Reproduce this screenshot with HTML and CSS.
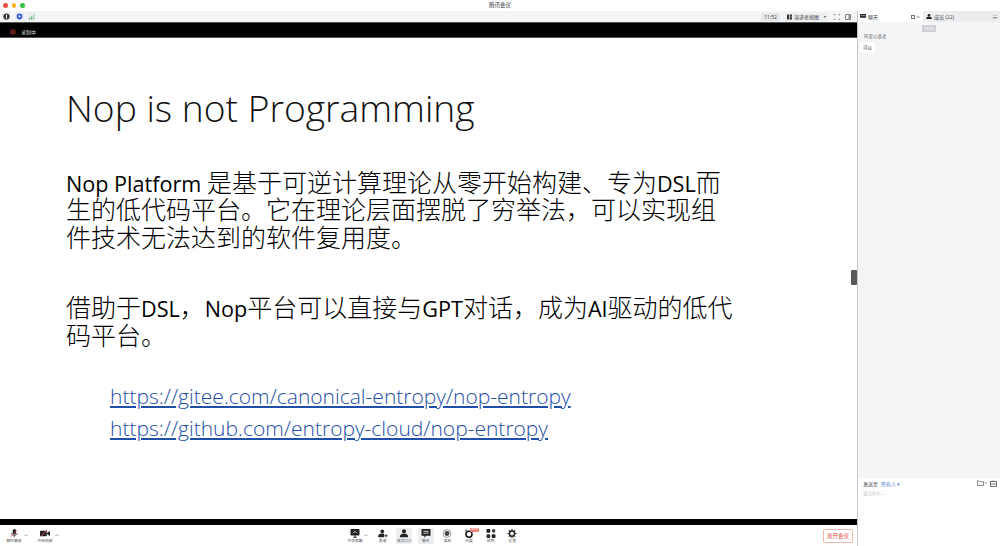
FILE: index.html
```html
<!DOCTYPE html>
<html lang="zh">
<head>
<meta charset="utf-8">
<title>腾讯会议</title>
<link rel="stylesheet" href="styles.css">
</head>
<body>
<header class="titlebar">
  <div class="lights"><i class="light red"></i><i class="light yellow"></i><i class="light green"></i></div>
  <div class="title">腾讯会议</div>
</header>
<div class="main">
  <div class="stage">
    <div class="topbar">
      <div class="status-icons">
        <span class="status-btn"><svg width="7" height="7" viewBox="0 0 9 9"><circle cx="4.500" cy="4.500" r="4" fill="#333"/><rect x="3.800" y="2" width="1.400" height="5" fill="#fff"/></svg></span>
        <span class="status-btn"><svg width="7" height="7" viewBox="0 0 9 9"><path d="M4.500.5 8 2v3c0 2-2 3-3.500 3.500C3 8 1 7 1 5V2z" fill="#2b50e0"/><circle cx="4.500" cy="4.300" r="1.500" fill="#fff"/></svg></span>
        <span class="status-btn"><svg width="6" height="6" viewBox="0 0 9 8"><rect x="0" y="5" width="2" height="3" fill="#6cb87a"/><rect x="3" y="3" width="2" height="5" fill="#6cb87a"/><rect x="6" y="0" width="2" height="8" fill="#a9d6b1"/></svg></span>
      </div>
      <div class="top-right">
        <span class="clock">11:52</span>
        <span class="view-btn"><svg width="6" height="6" viewBox="0 0 7 7"><path d="M0 0h3v7H0zM4 0h3v3H4zM4 4h3v3H4z" fill="#333"/></svg>演讲者视图<b class="caret">▾</b></span>
        <svg class="fs-icon" width="6" height="6" viewBox="0 0 7 7"><path d="M0 2V0h2M5 0h2v2M7 5v2H5M2 7H0V5" fill="none" stroke="#555" stroke-width=".8"/></svg>
        <svg class="fs-icon" width="6" height="6" viewBox="0 0 7 7"><rect x=".5" y=".5" width="6" height="6" rx="1" fill="none" stroke="#555"/><rect x="4" y="1" width="2" height="5" fill="#999"/></svg>
      </div>
    </div>
    <div class="recbar"><span class="rec-wrap"><i class="rec-dot"></i><span class="rec-text">录制中</span></span></div>
    <div class="slide">
      <h1 class="slide-title">Nop is not Programming</h1>
      <p class="para first"><span class="lat">Nop Platform </span>是基于可逆计算理论从零开始构建、专为<span class="lat">DSL</span>而生的低代码平台。它在理论层面摆脱了穷举法，可以实现组件技术无法达到的软件复用度。</p>
      <p class="para second">借助于<span class="lat">DSL</span>，<span class="lat">Nop</span>平台可以直接与<span class="lat">GPT</span>对话，成为<span class="lat">AI</span>驱动的低代码平台。</p>
      <a class="link first-link" href="#">https://gitee.com/canonical-entropy/nop-entropy</a>
      <a class="link" href="#">https://github.com/entropy-cloud/nop-entropy</a>
      <span class="handle"></span>
    </div>
    <div class="blackbar"></div>
    <footer class="toolbar">
      <div class="tool-left">
        <div class="tool"><svg viewBox="0 0 14 14"><rect x="5" y="0" width="5" height="9" rx="2.500" fill="#222"/><path d="M3 6c0 3 2 4.500 4.500 4.500S12 9 12 6M7.500 10.500V13" fill="none" stroke="#222"/><path d="M2 12 12 2" stroke="#e5484d" stroke-width="1.300"/></svg><span>解除静音</span></div>
        <span class="chev">︿</span>
        <div class="tool video"><svg viewBox="0 0 14 12"><rect x="0" y="2" width="9.500" height="8" rx="1" fill="#222"/><path d="m10 5 4-2.500v7L10 7z" fill="#222"/><path d="M1 10 10 1" stroke="#e5484d" stroke-width="1.300"/></svg><span>开启视频</span></div>
        <span class="chev">︿</span>
      </div>
      <div class="tool-center">
        <div class="tool"><svg viewBox="0 0 13 12"><rect x=".5" y="0" width="12" height="8.500" rx="1" fill="#222"/><path d="M4 11h5M6.500 8.500V11" stroke="#222" stroke-width="1.200"/><path d="M4 5.500 6.500 3 9 5.500" fill="none" stroke="#fff"/></svg><span>共享屏幕</span></div>
        <span class="chev narrow">︿</span>
        <div class="tool"><svg viewBox="0 0 13 12"><circle cx="5.500" cy="3" r="2.500" fill="#222"/><path d="M0 11c0-4 2-5 5.500-5 1 0 2 .2 2.500.5V11z" fill="#222"/><path d="M10.500 7v4M8.500 9h4" stroke="#222" stroke-width="1.200"/></svg><span>邀请</span></div>
        <div class="tool active"><svg viewBox="0 0 13 12"><circle cx="6.500" cy="3" r="2.700" fill="#222"/><path d="M1 11c0-3.500 2-5 5.500-5s5.500 1.500 5.500 5z" fill="#222"/></svg><span>成员(22)</span></div>
        <div class="tool active"><svg viewBox="0 0 12 12"><path d="M0 0h12v9H6l-2 3V9H0z" fill="#222"/><path d="M2.500 3h7M2.500 5.500h7" stroke="#fff"/></svg><span>聊天</span></div>
        <div class="tool"><svg viewBox="0 0 12 12"><circle cx="6" cy="6" r="5.200" fill="none" stroke="#777"/><circle cx="6" cy="6" r="3.200" fill="#444"/></svg><span>录制</span></div>
        <div class="tool"><svg viewBox="0 0 13 12"><circle cx="6.500" cy="7" r="4" fill="none" stroke="#111" stroke-width="2"/><path d="m1 3 3-2M12 3 9 1" stroke="#222" stroke-width="1.200"/></svg><span>纪要</span><b class="badge">NEW</b></div>
        <div class="tool"><svg viewBox="0 0 12 12"><rect x="0" y="0" width="5" height="5" rx="1" fill="#222"/><circle cx="9.500" cy="2.500" r="2.400" fill="#444"/><rect x="0" y="7" width="5" height="5" rx="1" fill="#333"/><rect x="7" y="7" width="5" height="5" rx="1" fill="#222"/></svg><span>应用</span></div>
        <div class="tool"><svg viewBox="0 0 12 12"><circle cx="6" cy="6" r="3.500" fill="none" stroke="#222" stroke-width="2"/><path d="M6 0v2.500M6 9.500V12M0 6h2.500M9.500 6H12M1.800 1.800l1.800 1.800M8.400 8.400l1.800 1.800M10.200 1.800 8.400 3.600M3.600 8.400l-1.800 1.800" stroke="#222" stroke-width="1.500"/></svg><span>设置</span></div>
      </div>
      <button class="leave">离开会议</button>
    </footer>
  </div>
  <aside class="panel">
    <div class="tabs">
      <div class="tab selected"><svg width="6" height="5" viewBox="0 0 7 6"><path d="M0 0h7v4.500H0z" fill="#222"/><path d="M1 2h5" stroke="#fff" stroke-width=".7"/></svg><span class="tab-label">聊天</span><span class="tab-tools"><i class="pop"></i><span class="close">×</span></span></div>
      <div class="tab"><svg width="6" height="5" viewBox="0 0 7 6"><circle cx="3.500" cy="1.500" r="1.500" fill="#222"/><path d="M0 6c0-2 1.500-3 3.500-3S7 4 7 6z" fill="#222"/></svg><span class="tab-label">成员 (22)</span></div>
      <div class="tab-menu">≡</div>
    </div>
    <div class="messages">
      <div class="msg-time"><span>16:03</span></div>
      <div class="sender">鸣翠の备者</div>
      <div class="bubble">可以</div>
    </div>
    <div class="composer">
      <div class="send-row">
        <span class="send-to">发送至</span><span class="send-all">所有人 ▾</span>
        <span class="send-tools">
          <svg width="7" height="6" viewBox="0 0 8 7"><path d="M.5 1h2l1 1h4v4.500h-7z" fill="none" stroke="#555" stroke-width=".8"/></svg>
          <small>▾</small>
          <svg width="7" height="7" viewBox="0 0 7 7"><rect x=".5" y="1.500" width="6" height="5" fill="none" stroke="#555" stroke-width=".8"/><path d="M1 4h5M2.500 0h2" stroke="#555" stroke-width=".8"/></svg>
        </span>
      </div>
      <div class="placeholder">说点什么...</div>
    </div>
  </aside>
</div>
</body>
</html>
```
FILE: styles.css
```css
* { box-sizing: border-box; }
html, body { margin: 0; padding: 0; height: 546px; overflow: hidden; background: #fff; }
body { font-family: "Open Sans", "Noto Sans CJK SC", sans-serif; color: #222; }
i { display: block; font-style: normal; }
.titlebar { height: 11px; position: relative; background: #fff; display: flex; align-items: center; justify-content: center; }
.lights { position: absolute; left: 3px; top: 3px; display: flex; gap: 4px; }
.light { width: 4.500px; height: 4.500px; border-radius: 50%; }
.red { background: #f0504a; }
.yellow { background: #f2b02c; }
.green { background: #30c240; }
.title { font-size: 5.500px; color: #333; line-height: 11px; }
.main { display: grid; grid-template-columns: 857px 143px; height: 535px; }
.stage { display: flex; flex-direction: column; height: 535px; border-right: 1px solid #c9c9c9; width: 858px; }
.topbar { height: 11px; background: #f4f5f7; display: flex; justify-content: space-between; align-items: center; padding: 0 6px 0 2px; }
.status-icons { display: flex; gap: 3.500px; }
.status-btn { width: 9px; height: 9px; background: #eceef1; display: flex; align-items: center; justify-content: center; border-radius: 1px; }
.top-right { display: flex; align-items: center; font-size: 5px; color: #444; }
.clock { background: #e7e8ea; width: 19px; text-align: center; line-height: 8px; margin-right: 5px; }
.view-btn { background: #eceef0; display: flex; align-items: center; gap: 2px; height: 8px; width: 43px; padding: 0 2px; margin-right: 1px; white-space: nowrap; }
.caret { font-size: 4px; margin-left: 3px; font-weight: 400; }
.fs-icon { margin-left: 5px; }
.recbar { height: 16px; background: #000; border-top: 1px solid #555; border-bottom: 1px solid #555; display: flex; align-items: center; padding: 3px 0 0 10px; }
.rec-wrap { display: flex; align-items: center; gap: 5px; }
.rec-dot { width: 6px; height: 6px; background: #5b1a16; border-radius: 50%; }
.rec-text { color: #ddd; font-size: 5px; }
.slide { flex: 1; position: relative; background: #fff; padding: 45px 0 0 66px; display: flex; flex-direction: column; align-items: flex-start; min-height: 0; }
.slide-title { margin: 0; font-weight: 300; font-size: 37.200px; line-height: 50px; color: #111; white-space: nowrap; }
.para { margin: 0; width: 668px; font-size: 25px; font-weight: 300; line-height: 27.400px; color: #000; font-family: "Noto Sans CJK SC", sans-serif; }
.lat { font-family: "Open Sans", sans-serif; font-size: 21.600px; font-weight: 400; line-height: 1; }
.first { margin-top: 35px; }
.second { margin-top: 43px; }
.link { color: #1f4fa8; font-size: 21px; line-height: 32px; margin-left: 44px; text-decoration: underline; font-weight: 300; white-space: nowrap; }
.first-link { margin-top: 32px; }
.handle { position: absolute; right: 0; top: 232px; width: 6px; height: 15px; background: #5a5a5a; border-radius: 1px; }
.blackbar { height: 6px; background: #000; flex: none; }
.toolbar { height: 21px; flex: none; background: #fff; display: flex; align-items: flex-start; position: relative; padding-top: 3px; }
.tool-left { display: flex; align-items: flex-start; padding-left: 6px; }
.tool-center { position: absolute; left: 347px; top: 3px; display: flex; align-items: flex-start; gap: 5.600px; }
.tool { position: relative; width: 16px; height: 16px; display: flex; flex-direction: column; align-items: center; padding-top: 1px; border-radius: 1px; flex: none; }
.tool svg { flex: none; height: 9px; width: 10px; }
.tool span { font-size: 3.800px; line-height: 6px; color: #555; white-space: nowrap; }
.active { background: #eceef1; }
.video { margin-left: 7px; }
.chev { font-size: 4px; line-height: 14px; color: #555; width: 8px; text-align: center; }
.narrow { width: 6px; margin-left: -5.600px; }
.badge { position: absolute; right: -2px; top: 0; background: #ee7f76; color: #fff; font-size: 3px; line-height: 3.500px; padding: 0 1px; border-radius: 1px; font-weight: 400; }
.leave { position: absolute; right: 4px; top: 4px; width: 30px; height: 14px; background: #fff; border: 1px solid #eeb4ae; border-radius: 1.500px; color: #e5483d; font: 5.500px "Noto Sans CJK SC", sans-serif; padding: 0; }
.panel { width: 142px; margin-left: 1px; background: #f4f5f7; display: flex; flex-direction: column; height: 535px; }
.tabs { height: 11px; display: flex; align-items: center; background: #ededf0; font-size: 5px; }
.tab { display: flex; align-items: center; gap: 2px; height: 11px; padding: 0 3px; color: #444; }
.tab.selected { background: #fff; width: 65px; padding-left: 2px; }
.tab-tools { margin-left: auto; display: flex; gap: 2px; align-items: center; }
.pop { width: 4px; height: 4px; border: .6px solid #777; }
.close { font-size: 6px; color: #666; line-height: 6px; }
.tab-menu { margin-left: auto; width: 10px; font-size: 6px; color: #555; text-align: center; }
.messages { flex: 1; padding: 3px 2px; min-height: 0; display: flex; flex-direction: column; align-items: flex-start; }
.msg-time { display: flex; justify-content: center; align-self: stretch; }
.msg-time span { background: #cfd0d3; color: #fff; font-size: 4px; line-height: 7px; padding: 0 2px; }
.sender { font-size: 4.500px; color: #777; line-height: 7px; margin-top: 1px; margin-left: 4px; }
.bubble { margin-top: 2px; background: #fff; font-size: 4.500px; line-height: 7px; color: #333; padding: 2px 3px; border-radius: 1px; }
.composer { height: 68px; background: #fff; padding: 1px 3px 0 5px; }
.send-row { display: flex; align-items: center; font-size: 5px; height: 8px; }
.send-to { color: #444; margin-right: 3px; }
.send-all { color: #4a72d8; }
.send-tools { margin-left: auto; display: flex; gap: 1px; align-items: center; }
.send-tools small { font-size: 3px; margin-right: 2px; }
.placeholder { font-size: 4.500px; color: #bbb; margin-top: 2px; line-height: 8px; }
```
